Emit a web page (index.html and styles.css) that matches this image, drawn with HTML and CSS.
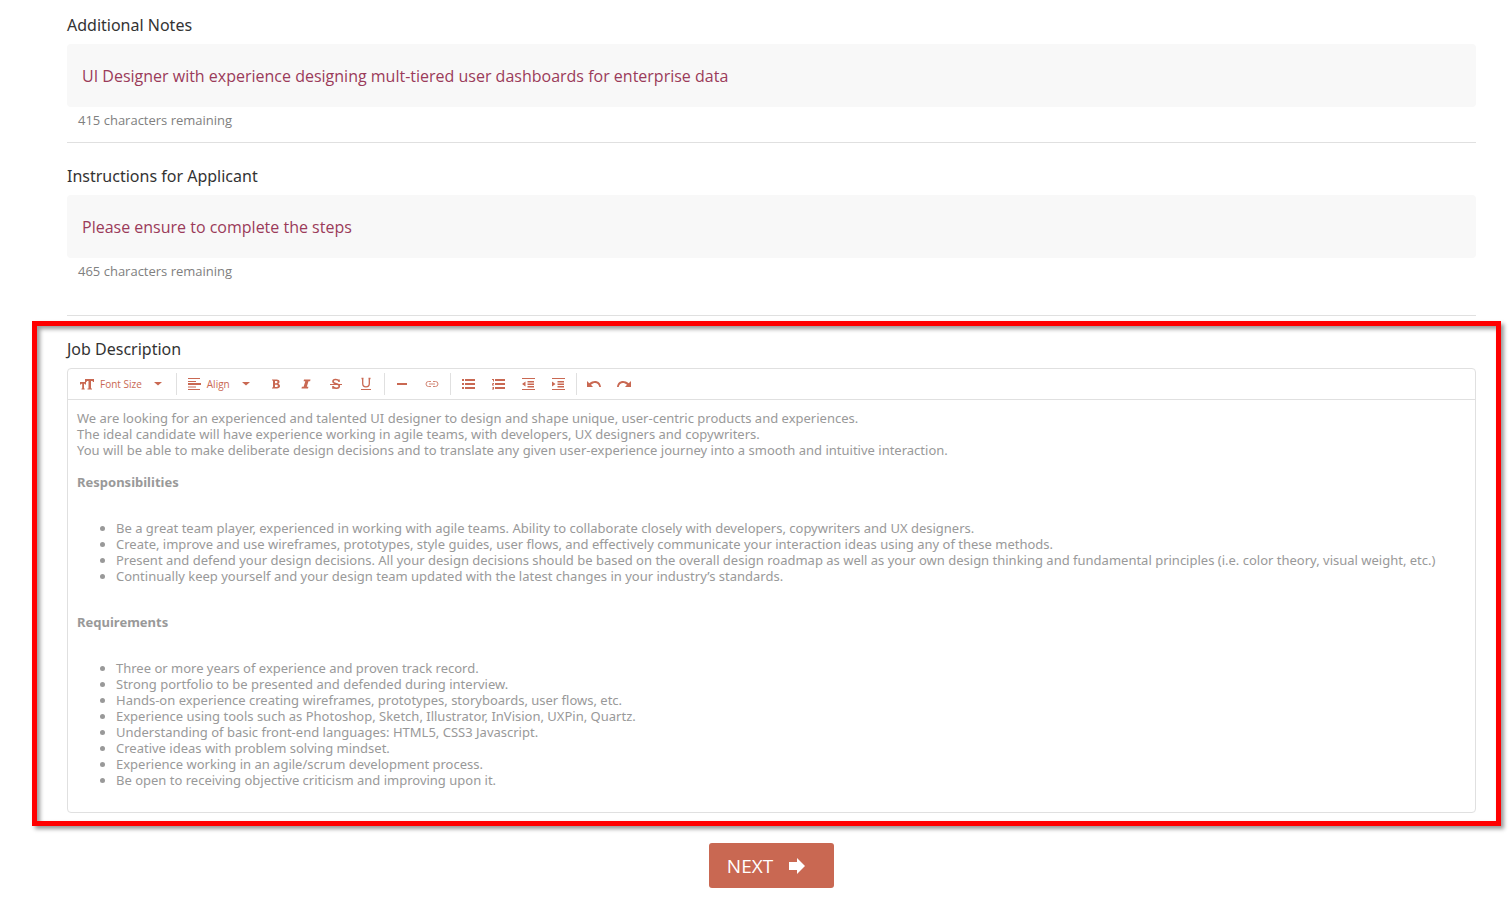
FILE: index.html
```html
<!DOCTYPE html>
<html lang="en">
<head>
<meta charset="utf-8">
<title>Job Details</title>
<link rel="stylesheet" href="styles.css">
</head>
<body>
<form class="page">
  <section class="field">
    <label class="label" for="notes">Additional Notes</label>
    <input class="text-input" id="notes" type="text" value="UI Designer with experience designing mult-tiered user dashboards for enterprise data">
    <p class="hint">415 characters remaining</p>
  </section>
  <section class="field field-last">
    <label class="label" for="instructions">Instructions for Applicant</label>
    <input class="text-input" id="instructions" type="text" value="Please ensure to complete the steps">
    <p class="hint">465 characters remaining</p>
  </section>

  <section class="highlight">
    <h2 class="label" id="job-label">Job Description</h2>
    <div class="editor">
      <div class="toolbar" role="toolbar" aria-label="Formatting">
        <div class="group">
          <button class="menu" type="button">
            <svg class="icon" viewBox="0 0 14 14"><path d="M5 2h9v3h-1l-.5-1h-1.500v7.500h1v1H7.500v-1h1V4H7L6.500 5H5zM0 5h6v2.500h-1L4.700 6.800H4v4.700h.7v1H1.500v-1h.7V6.800h-.8L1 7.500H0z"/></svg>
            <span>Font Size</span>
            <svg class="caret" viewBox="0 0 8 4"><path d="M0 0h8L4 3.500z"/></svg>
          </button>
        </div>
        <div class="group">
          <button class="menu" type="button">
            <svg class="icon" viewBox="0 0 14 14"><path d="M1 1h12v1H1zM1 4h8v1H1zM1 6h13v2H1zM1 9.500h8v1H1zM1 12h12v1H1z"/></svg>
            <span>Align</span>
            <svg class="caret" viewBox="0 0 8 4"><path d="M0 0h8L4 3.500z"/></svg>
          </button>
          <button class="tool" type="button" aria-label="Bold"><svg class="icon" viewBox="0 0 14 14"><path fill-rule="evenodd" d="M3 2.500h4.700c3.300 0 3.600 3.300 1.600 4.300 2.700 1 2.300 4.700-1.300 4.700H3v-1h1v-7H3zM6 4v2.200h1.400c1.500 0 1.500-2.200 0-2.200zM6 7.700V10h1.600c1.700 0 1.700-2.300 0-2.300z"/></svg></button>
          <button class="tool" type="button" aria-label="Italic"><svg class="icon" viewBox="0 0 14 14"><path d="M5 2.500h6.500l-.4 1.700H9.500L7.800 9.800h1.600L9 11.500H2.500l.4-1.700h1.700l1.700-5.600H4.600z"/></svg></button>
          <button class="tool" type="button" aria-label="Strikethrough"><svg class="icon line" viewBox="0 0 14 14"><path stroke-width="1.600" d="M10 5V2.500M10 4C8.500 2 4 2 4 4.500 4 7.300 10.300 6.300 10.300 9c0 3-5 2.800-6.300.8M4 9v2.700"/><path d="M1 7.500h12"/></svg></button>
          <button class="tool" type="button" aria-label="Underline"><svg class="icon line" viewBox="0 0 14 14"><path stroke-width="1.300" d="M2.500 1.500h2M9.500 1.500h2M3.700 1.500v5c0 4.600 6.600 4.600 6.600 0v-5"/><path d="M2 12.500h10"/></svg></button>
        </div>
        <div class="group">
          <button class="tool" type="button" aria-label="Horizontal rule"><svg class="icon" viewBox="0 0 14 14"><path d="M2 6h10v2H2z"/></svg></button>
          <button class="tool" type="button" aria-label="Link"><svg class="icon line light" viewBox="0 0 14 14"><path d="M6 4.500H3.500a2.500 2.500 0 0 0 0 5H6M8 4.500h2.500a2.500 2.500 0 0 1 0 5H8M4 7h6"/></svg></button>
        </div>
        <div class="group">
          <button class="tool" type="button" aria-label="Bulleted list"><svg class="icon" viewBox="0 0 14 14"><path d="M1 2h2v2H1zM4 2h10v2H4zM1 6h2v2H1zM4 6h10v2H4zM1 10h2v2H1zM4 10h10v2H4z"/></svg></button>
          <button class="tool" type="button" aria-label="Numbered list"><svg class="icon" viewBox="0 0 14 14"><path d="M4 2h10v2H4zM4 6h10v2H4zM4 10h10v2H4zM1 2h2v2.500H2V3H1zM1 6h2v1L2 8h1v.5H1V7.500L2 6.500H1zM1 10h2v2.500H1V12h1v-.5H1V11h1v-.5H1z"/></svg></button>
          <button class="tool" type="button" aria-label="Decrease indent"><svg class="icon" viewBox="0 0 14 14"><path d="M1 1h13v1H1zM6.500 4H13v1.500H6.500zM6.500 6.500H13V8H6.500zM6.500 9H13v1.500H6.500zM1 12h13v1H1zM4.500 4.500v5L1 7z"/></svg></button>
          <button class="tool" type="button" aria-label="Increase indent"><svg class="icon" viewBox="0 0 14 14"><path d="M1 1h13v1H1zM6.500 4H13v1.500H6.500zM6.500 6.500H13V8H6.500zM6.500 9H13v1.500H6.500zM1 12h13v1H1zM1 4.500v5L4.500 7z"/></svg></button>
        </div>
        <div class="group">
          <button class="tool" type="button" aria-label="Undo"><svg class="icon" viewBox="0 0 14 14"><path d="M0 4v6h6L4 7.800C7.500 4.800 11.500 6 12.300 10H14C13.500 3.500 7 2.200 2.300 6.200z"/></svg></button>
          <button class="tool" type="button" aria-label="Redo"><svg class="icon" viewBox="0 0 14 14"><path d="M14 4v6H8l2-2.200C6.500 4.800 2.500 6 1.700 10H0C.5 3.500 7 2.200 11.700 6.200z"/></svg></button>
        </div>
      </div>
      <div class="content" contenteditable="true" spellcheck="false" role="textbox" aria-multiline="true" aria-labelledby="job-label">
        <p>We are looking for an experienced and talented UI designer to design and shape unique, user-centric products and experiences.<br>The ideal candidate will have experience working in agile teams, with developers, UX designers and copywriters.<br>You will be able to make deliberate design decisions and to translate any given user-experience journey into a smooth and intuitive interaction.</p>
        <h3>Responsibilities</h3>
        <ul>
          <li>Be a great team player, experienced in working with agile teams. Ability to collaborate closely with developers, copywriters and UX designers.</li>
          <li>Create, improve and use wireframes, prototypes, style guides, user flows, and effectively communicate your interaction ideas using any of these methods.</li>
          <li>Present and defend your design decisions. All your design decisions should be based on the overall design roadmap as well as your own design thinking and fundamental principles (i.e. color theory, visual weight, etc.)</li>
          <li>Continually keep yourself and your design team updated with the latest changes in your industry’s standards.</li>
        </ul>
        <h3>Requirements</h3>
        <ul>
          <li>Three or more years of experience and proven track record.</li>
          <li>Strong portfolio to be presented and defended during interview.</li>
          <li>Hands-on experience creating wireframes, prototypes, storyboards, user flows, etc.</li>
          <li>Experience using tools such as Photoshop, Sketch, Illustrator, InVision, UXPin, Quartz.</li>
          <li>Understanding of basic front-end languages: HTML5, CSS3 Javascript.</li>
          <li>Creative ideas with problem solving mindset.</li>
          <li>Experience working in an agile/scrum development process.</li>
          <li>Be open to receiving objective criticism and improving upon it.</li>
        </ul>
      </div>
    </div>
  </section>

  <div class="actions">
    <button class="next" type="submit"><span>NEXT</span>
      <svg class="arrow" viewBox="0 0 16 16"><path d="M0 4h8V0l8 8-8 8v-4H0z"/></svg>
    </button>
  </div>
</form>
</body>
</html>
```
FILE: styles.css
```css
* {
  box-sizing: border-box;
}

body {
  margin: 0;
  background: #fff;
  color: #333;
  font-family: "Open Sans", "Noto Sans", sans-serif;
}

button,
input {
  font-family: inherit;
}

.page {
  padding: 14px 10px 13px 32px;
}

.field {
  margin: 0 25px 22px 35px;
  padding-bottom: 13px;
  border-bottom: 1px solid #e0e0e0;
}

.field-last {
  margin-bottom: 5px;
  padding-bottom: 35px;
}

.label {
  display: block;
  margin: 0 0 8px;
  font-family: "Noto Sans", "Open Sans", sans-serif;
  font-size: 16px;
  font-weight: 400;
  line-height: 22px;
}

.text-input {
  display: block;
  width: 100%;
  height: 63px;
  padding: 0 15px;
  border: 0;
  border-radius: 4px;
  background: #f8f8f8;
  color: #9b3b5a;
  font-size: 16px;
}

.hint {
  margin: 4px 11px 0;
  color: #808080;
  font-size: 13px;
  line-height: 18px;
}

.highlight {
  padding: 12px 20px 8px 30px;
  border: 5px solid #f00;
  box-shadow: 3px 3px 4px rgba(0, 0, 0, 0.4), inset 3px 3px 4px rgba(0, 0, 0, 0.4);
}

.editor {
  border: 1px solid #e0e0e0;
  border-radius: 4px;
}

.toolbar {
  display: flex;
  align-items: center;
  height: 31px;
  border-bottom: 1px solid #e0e0e0;
}

.group {
  display: flex;
  align-items: center;
  height: 22px;
}

.group + .group {
  border-left: 1px solid #e0e0e0;
  padding: 0 3px 0 2px;
}

.menu,
.tool {
  display: flex;
  align-items: center;
  height: 22px;
  border: 0;
  background: none;
  color: #c96852;
}

.menu {
  padding: 0 14px 0 12px;
  font-size: 10px;
}

.group + .group .menu {
  padding: 0 11px 0 8px;
}

.menu span {
  margin: 0 12px 0 6px;
}

.tool {
  justify-content: center;
  width: 30px;
  padding: 0;
}

.icon {
  width: 14px;
  height: 14px;
  fill: currentColor;
}

.line {
  fill: none;
  stroke: currentColor;
}

.light {
  opacity: 0.8;
}

.caret {
  width: 8px;
  height: 4px;
  fill: currentColor;
}

.content {
  padding: 10px 9px 24px;
  color: #999;
  font-family: "Noto Sans", "Open Sans", sans-serif;
  font-size: 13px;
  line-height: 16px;
  outline: 0;
}

.content p {
  margin: 0 0 16px;
}

.content h3 {
  margin: 0;
  font-size: 13px;
  font-weight: 700;
}

.content ul {
  margin: 30px 0;
  padding-left: 39px;
}

.content ul:last-child {
  margin-bottom: 0;
}

.actions {
  display: flex;
  justify-content: center;
  margin: 17px 25px 0 35px;
}

.next {
  display: flex;
  align-items: center;
  gap: 16px;
  height: 45px;
  padding: 0 29px 0 18px;
  border: 0;
  border-radius: 3px;
  background: #c96852;
  color: #fff;
  font-size: 19px;
}

.arrow {
  width: 16px;
  height: 16px;
  fill: currentColor;
}
```
